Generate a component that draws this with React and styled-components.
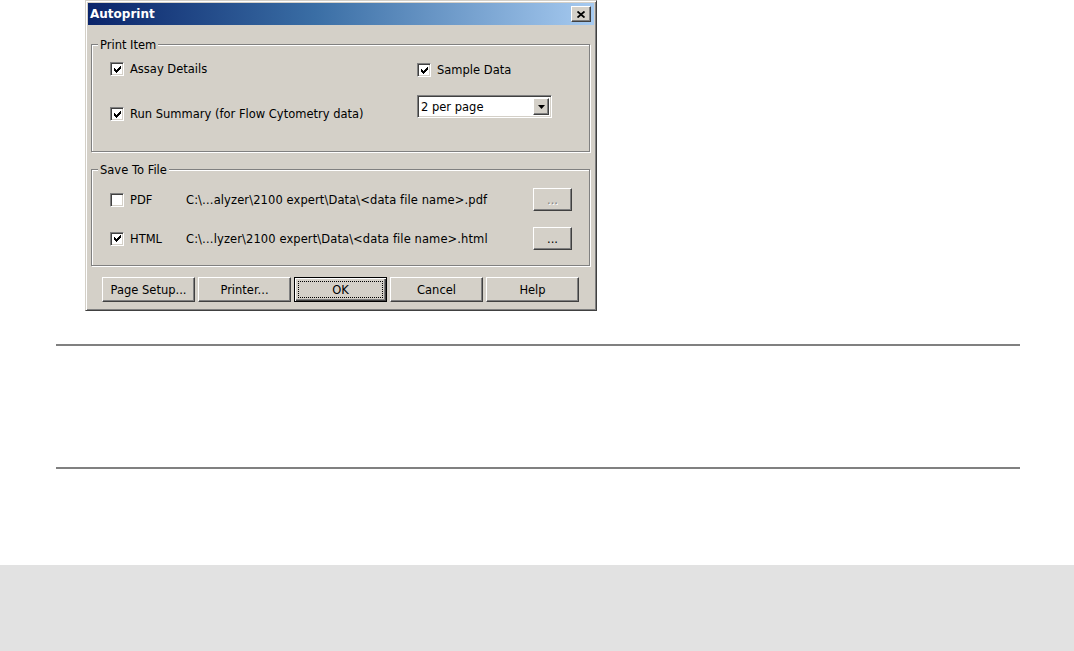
import React from 'react'
import styled, { createGlobalStyle, css } from 'styled-components'

const GlobalStyle = createGlobalStyle`
  html, body { margin:0; padding:0; background:#fff; }
  body { font-family:"DejaVu Sans", Verdana, sans-serif; }
`;

const face = '#d4d0c8';

// classic win2000 bevels
const raised = css`
  border:1px solid;
  border-color:#fff #404040 #404040 #fff;
  box-shadow:inset -1px -1px #808080;
`;
const sunken = css`
  border:1px solid;
  border-color:#808080 #fff #fff #808080;
  box-shadow:inset 1px 1px #404040, inset -1px -1px ${face};
`;

const Page = styled.div`
  display:flex;
  flex-direction:column;
`;
const Figure = styled.div`
  padding-left:85px;
`;
const Dialog = styled.div`
  width:512px;
  height:311px;
  box-sizing:border-box;
  background:${face};
  border:1px solid;
  border-color:${face} #404040 #404040 ${face};
  box-shadow:inset 1px 1px #fff, inset -1px -1px #808080;
  padding:2px;
  display:flex;
  flex-direction:column;
  font-size:11.5px;
  color:#000;
`;
const TitleBar = styled.div`
  height:22px;
  flex:none;
  display:flex;
  align-items:center;
  justify-content:space-between;
  padding:0 3px 0 2px;
  background:linear-gradient(to right, #0a246a 0%, #3a6ea5 45%, #a6caf0 100%);
`;
const Title = styled.span`
  color:#fff;
  font-weight:bold;
  font-size:12px;
`;
const CloseBtn = styled.div`
  ${raised};
  box-sizing:border-box;
  width:20px;
  height:16px;
  background:${face};
  display:flex;
  align-items:center;
  justify-content:center;
`;
const Body = styled.div`
  display:flex;
  flex-direction:column;
  padding:19px 4px 0 3px;
`;
const Group = styled.div`
  position:relative;
  box-sizing:border-box;
  height:${p => p.$h}px;
  margin-top:${p => p.$mt || 0}px;
  border:1px solid #808080;
  box-shadow:inset 1px 1px #fff, 1px 1px #fff;
`;
const Legend = styled.span`
  position:absolute;
  top:-7px;
  left:6px;
  padding:0 2px;
  line-height:14px;
  background:${face};
`;
const PrintGrid = styled.div`
  display:grid;
  grid-template-columns:307px 1fr;
  padding-left:18px;
`;
const Col = styled.div`
  display:flex;
  flex-direction:column;
  align-items:flex-start;
  padding-top:${p => p.$pt}px;
  gap:${p => p.$gap}px;
`;
const CheckRow = styled.label`
  display:flex;
  align-items:center;
  gap:6px;
  height:16px;
  white-space:nowrap;
`;
const Box = styled.span`
  ${sunken};
  box-sizing:border-box;
  width:14px;
  height:14px;
  background:#fff;
  display:flex;
  align-items:center;
  justify-content:center;
  flex:none;
`;
const Combo = styled.div`
  ${sunken};
  box-sizing:border-box;
  width:135px;
  height:23px;
  background:#fff;
  display:flex;
  align-items:stretch;
  padding:2px;
`;
const ComboText = styled.span`
  flex:1;
  display:flex;
  align-items:center;
  padding-left:1px;
`;
const ArrowBtn = styled.span`
  ${raised};
  box-sizing:border-box;
  width:16px;
  background:${face};
  display:flex;
  align-items:center;
  justify-content:center;
`;
const FileRows = styled.div`
  display:flex;
  flex-direction:column;
  gap:16px;
  padding:18px 17px 0 18px;
`;
const FileRow = styled.div`
  display:grid;
  grid-template-columns:76px 1fr 39px;
  align-items:center;
  height:23px;
`;
const Path = styled.span`
  white-space:nowrap;
  letter-spacing:0.1px;
`;
const Btn = styled.div`
  ${raised};
  box-sizing:border-box;
  height:${p => p.$h || 25}px;
  background:${face};
  display:flex;
  align-items:center;
  justify-content:center;
  color:${p => (p.$disabled ? '#808080' : '#000')};
  text-shadow:${p => (p.$disabled ? '1px 1px #fff' : 'none')};
  ${p => p.$default && css`
    border:1px solid #000;
    box-shadow:inset 1px 1px #fff, inset -1px -1px #404040, inset -2px -2px #808080;
  `}
`;
const Focus = styled.span`
  flex:1;
  align-self:stretch;
  margin:3px;
  border:1px dotted #000;
  display:flex;
  align-items:center;
  justify-content:center;
`;
const ButtonBar = styled.div`
  display:grid;
  grid-template-columns:repeat(5, 93px);
  gap:3px;
  margin-top:11px;
  padding-left:11px;
`;
const Rule = styled.div`
  height:2px;
  width:964px;
  margin-left:56px;
  margin-top:${p => p.$mt}px;
  background:#808080;
`;
const Footer = styled.div`
  height:86px;
  margin-top:96px;
  background:#e2e2e2;
`;

const Check = () => (
  <svg width="7" height="7" viewBox="0 0 7 7" shapeRendering="crispEdges">
    <polygon points="0,2 2,4 7,-1 7,2 2,7 0,5" fill="#000" />
  </svg>
);

const CheckBox = ({ checked, children }) => (
  <CheckRow>
    <Box>{checked && <Check />}</Box>
    {children}
  </CheckRow>
);

const App = () => {
  const files = [
    { label: 'PDF', checked: false, path: 'C:\\…alyzer\\2100 expert\\Data\\<data file name>.pdf', disabled: true },
    { label: 'HTML', checked: true, path: 'C:\\…lyzer\\2100 expert\\Data\\<data file name>.html', disabled: false },
  ];
  return (
    <Page>
      <GlobalStyle />
      <Figure>
        <Dialog>
          <TitleBar>
            <Title>Autoprint</Title>
            <CloseBtn>
              <svg width="8" height="7" viewBox="0 0 8 7">
                <path d="M0.5 0.5 L7.5 6.5 M7.5 0.5 L0.5 6.5" stroke="#000" strokeWidth="1.8" />
              </svg>
            </CloseBtn>
          </TitleBar>
          <Body>
            <Group $h={108}>
              <Legend>Print Item</Legend>
              <PrintGrid>
                <Col $pt={16} $gap={29}>
                  <CheckBox checked>Assay Details</CheckBox>
                  <CheckBox checked>Run Summary (for Flow Cytometry data)</CheckBox>
                </Col>
                <Col $pt={17} $gap={17}>
                  <CheckBox checked>Sample Data</CheckBox>
                  <Combo>
                    <ComboText>2 per page</ComboText>
                    <ArrowBtn>
                      <svg width="7" height="4" viewBox="0 0 7 4">
                        <polygon points="0,0 7,0 3.5,4" fill="#000" />
                      </svg>
                    </ArrowBtn>
                  </Combo>
                </Col>
              </PrintGrid>
            </Group>
            <Group $h={97} $mt={17}>
              <Legend>Save To File</Legend>
              <FileRows>
                {files.map(f => (
                  <FileRow key={f.label}>
                    <CheckBox checked={f.checked}>{f.label}</CheckBox>
                    <Path>{f.path}</Path>
                    <Btn $h={23} $disabled={f.disabled}>...</Btn>
                  </FileRow>
                ))}
              </FileRows>
            </Group>
            <ButtonBar>
              <Btn>Page Setup...</Btn>
              <Btn>Printer...</Btn>
              <Btn $default><Focus>OK</Focus></Btn>
              <Btn>Cancel</Btn>
              <Btn>Help</Btn>
            </ButtonBar>
          </Body>
        </Dialog>
      </Figure>
      <Rule $mt={33} />
      <Rule $mt={121} />
      <Footer />
    </Page>
  );
};

export default App
